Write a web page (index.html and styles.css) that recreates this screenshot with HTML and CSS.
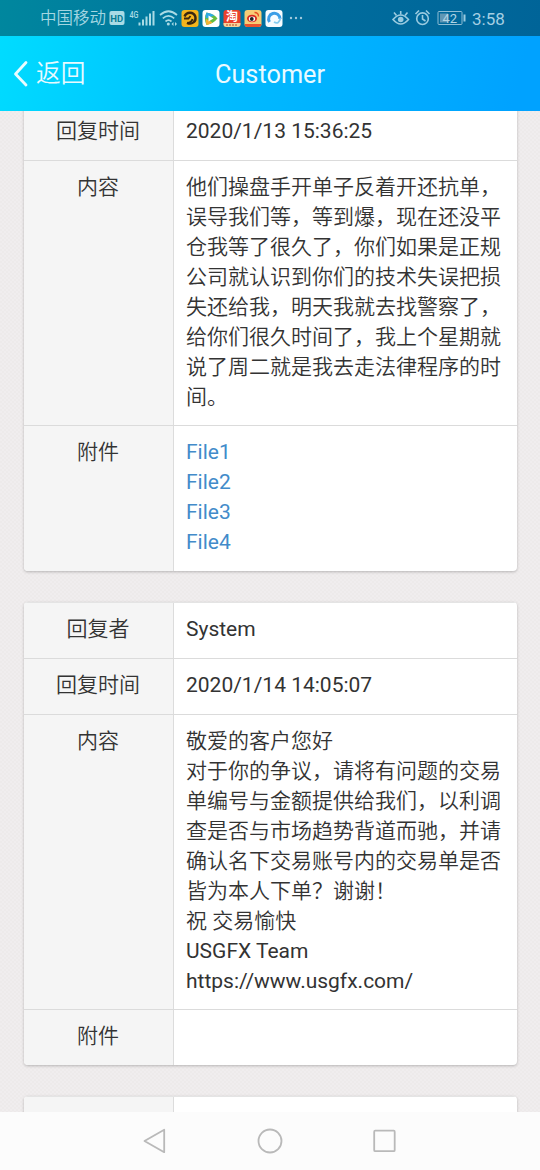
FILE: index.html
```html
<!DOCTYPE html>
<html lang="zh-CN">
<head>
<meta charset="utf-8">
<title>Customer</title>
<link rel="stylesheet" href="styles.css">
</head>
<body>
<div class="screen">
  <div class="status">
    <span class="carrier">中国移动</span>
    <svg class="glyphs" width="195" height="36" viewBox="109 0 195 36">
      <rect x="109.500" y="11" width="15" height="14" rx="2" fill="#a9dbe5"/>
      <text x="110.200" y="22" class="hd">HD</text>
      <text x="129.500" y="18" class="net" textLength="9" lengthAdjust="spacingAndGlyphs">4G</text>
      <path d="M139.500 25.500v-3M143 25.500v-6M146.500 25.500v-9M150 25.500V13.500M153.500 25.500V11" stroke="#a9dbe5" stroke-width="2"/>
      <g fill="none" stroke="#a9dbe5" stroke-width="1.700">
        <path d="M160 15q8.500-7.500 17 0M162.800 18.300q5.700-5 11.400 0M165.500 21.500q3-2.600 6 0"/>
      </g>
      <circle cx="168.300" cy="24" r="1.500" fill="#a9dbe5"/>
      <path d="M173.500 22v4l-2-2zM175 22v4l2-2z" fill="#a9dbe5"/>
      <rect x="181.500" y="10" width="17" height="17" rx="3" fill="#f4b51d"/>
      <g fill="none" stroke="#382710" stroke-width="2.400">
        <path d="M184.500 16.500c2-5 9-5 10.800 0 1.500 5-3.500 8.500-8.300 6.300"/>
        <path d="M184 18.500h4.500l2-2.500M187.500 23c3-.5 4.500-2 5-4" stroke-width="1.800"/>
      </g>
      <rect x="202.500" y="10" width="17" height="17" rx="3" fill="#fff"/>
      <path d="M206.500 12.500q8 1.500 11 6-4 5-11 6.500-3-6.500 0-12.500z" fill="#65bd40"/>
      <path d="M206.500 12.500q5 1 8 3l-8.500 3q-1-3 .5-6z" fill="#2da9e5"/><path d="M206.500 25q4-1 6-2.500L206 19q-.5 3 .5 6z" fill="#f6b335"/>
      <path d="M208.500 15.500l5 3-5 3z" fill="#fff"/>
      <rect x="223.500" y="10" width="17" height="17" rx="3" fill="#e9412c"/>
      <text x="226" y="21" class="tao">淘</text>
      <path d="M223.500 23h17v1q0 3-3 3h-11q-3 0-3-3z" fill="#f7d49b"/>
      <path d="M226 25h12" stroke="#b54b25" stroke-dasharray="2 1"/>
      <rect x="244.500" y="10" width="17" height="17" rx="3" fill="#f8cd76"/>
      <path d="M244.500 24h17q0 3-3 3h-11q-3 0-3-3z" fill="#eb542e"/>
      <ellipse cx="252" cy="18.500" rx="5" ry="3.800" fill="#d92b20"/><ellipse cx="252" cy="19" rx="3.200" ry="2.400" fill="#fff"/><circle cx="251.800" cy="19" r="1.900" fill="#222"/>
      <path d="M254.500 12.500q4 0 4 4" stroke="#e74e24" fill="none" stroke-width="1.300"/>
      <rect x="265.500" y="10" width="17" height="17" rx="3" fill="#f7fcff"/>
      <path d="M269.500 22a5.700 5.700 0 1 1 10.500-3" fill="none" stroke="#3c9ee7" stroke-width="3"/>
      <path d="M274 22q5 3 6.500-4" fill="none" stroke="#86ccef" stroke-width="1.800"/>
      <g fill="#a0cadd"><circle cx="291" cy="18" r="1.200"/><circle cx="296" cy="18" r="1.200"/><circle cx="301" cy="18" r="1.200"/></g>
    </svg>
    <svg class="power" width="76" height="36" viewBox="391 0 76 36">
      <g fill="none" stroke="#9acbe0" stroke-width="1.600">
        <path d="M393 19.500q7.700-9 15.500 0-7.700 9-15.500 0z"/>
        <path d="M400.700 14.500v-3.500M396.500 15.500l-2.500-3M405 15.500l2.500-3"/>
        <circle cx="422.500" cy="18.700" r="5.800"/><path d="M422.500 15v4l3 2M415.500 14l3.500-3.500M429.500 14l-3.500-3.500"/>
      </g>
      <circle cx="400.700" cy="19.500" r="2.800" fill="#9acbe0"/>
      <rect x="438" y="11.500" width="24" height="13" rx="1" fill="none" stroke="#8ebdd4"/>
      <rect x="440" y="13.500" width="8" height="9" fill="#6096b3"/>
      <rect x="463.500" y="14.500" width="2" height="7" fill="#9acbe0"/>
      <text x="442.500" y="23" class="level">42</text>
    </svg>
    <span class="clock">3:58</span>
  </div>
  <header class="header">
    <div class="back">
      <svg width="16" height="28" viewBox="0 0 16 28"><path d="M14 2.500 3.500 14l10.500 11" fill="none" stroke="#e9fcff" stroke-width="2.800" stroke-linecap="round" stroke-linejoin="round"/></svg>
      <span>返回</span>
    </div>
    <div class="title">Customer</div>
  </header>
  <main class="content">
    <section class="card first">
      <div class="row"><div class="label">回复时间</div><div class="value">2020/1/13 15:36:25</div></div>
      <div class="row"><div class="label">内容</div><div class="value">他们操盘手开单子反着开还抗单，<br>误导我们等，等到爆，现在还没平<br>仓我等了很久了，你们如果是正规<br>公司就认识到你们的技术失误把损<br>失还给我，明天我就去找警察了，<br>给你们很久时间了，我上个星期就<br>说了周二就是我去走法律程序的时<br>间。</div></div>
      <div class="row"><div class="label">附件</div><div class="value files"><a>File1</a><a>File2</a><a>File3</a><a>File4</a></div></div>
    </section>
    <section class="card">
      <div class="row"><div class="label">回复者</div><div class="value">System</div></div>
      <div class="row"><div class="label">回复时间</div><div class="value">2020/1/14 14:05:07</div></div>
      <div class="row"><div class="label">内容</div><div class="value">敬爱的客户您好<br>对于你的争议，请将有问题的交易<br>单编号与金额提供给我们，以利调<br>查是否与市场趋势背道而驰，并请<br>确认名下交易账号内的交易单是否<br>皆为本人下单？谢谢！<br>祝 交易愉快<br>USGFX Team<br>https://www.usgfx.com/</div></div>
      <div class="row"><div class="label">附件</div><div class="value"></div></div>
    </section>
    <section class="card">
      <div class="row"><div class="label"></div><div class="value"></div></div>
    </section>
  </main>
  <nav class="nav">
    <svg width="540" height="58" viewBox="0 0 540 58" fill="none" stroke="#b9b9b9" stroke-width="1.800" stroke-linejoin="round">
      <path d="M164.200 17.800v22.400L144.500 29z"/><circle cx="270" cy="29" r="11.500"/><rect x="374.200" y="18.700" width="20.500" height="20.500" rx="1"/>
    </svg>
  </nav>
</div>
</body>
</html>
```
FILE: styles.css
```css
* { box-sizing: border-box; }
body { margin: 0; }
.screen {
  width: 540px; height: 1170px; overflow: hidden;
  display: flex; flex-direction: column;
  font: 21px/30px Roboto, "Noto Sans CJK SC DemiLight", "Noto Sans CJK SC", sans-serif;
  color: #333;
}
.status {
  height: 36px; flex: none; display: flex; align-items: center;
  padding-left: 40px;
  background: linear-gradient(100deg, #00879e, #006f9f 50%, #006498);
}
.carrier { width: 69px; font-size: 16.5px; color: #a3d6e1; white-space: nowrap; font-weight: 300; padding-top: 2px; }
.glyphs { flex: none; }
.power { flex: none; margin-left: 87px; }
.clock { margin-left: 5px; font-size: 17px; color: #a5cfe3; padding-top: 1px; }
.hd { font: 700 9.5px Roboto, sans-serif; fill: #087c94; }
.net { font: 500 9px Roboto, sans-serif; fill: #a9dbe5; }
.tao { font: 700 12px "Noto Sans CJK SC", sans-serif; fill: #fff; }
.level { font: 13px Roboto, sans-serif; fill: #b1d5e5; }
.header {
  height: 75px; flex: none; display: grid;
  grid-template-columns: 1fr 112px 1fr; align-items: center;
  background: linear-gradient(105deg, #00dcff, #00baff 45%, #00a2ff 95%);
  color: #e9faff;
}
.back { display: flex; align-items: center; gap: 8px; padding-left: 12px; font-size: 24.7px; }
.title { font-size: 25.3px; text-align: center; white-space: nowrap; padding-top: 3px; }
.content {
  height: 1001px; flex: none; overflow: hidden; padding: 0 23.5px;
  background: repeating-conic-gradient(#edeaea 0 25%, #f0edee 0 50%) 0 0 / 4px 4px;
}
.card {
  width: 493px; margin-bottom: 31.5px; overflow: hidden;
  background: #fff; border-radius: 4px;
  box-shadow: 0 1px 3px rgba(0, 0, 0, .24);
}
.first { margin-top: -6.9px; }
.row { display: flex; min-height: 55.5px; border-top: 1px solid #dbdbdb; }
.row:first-child { border-top-color: #e4e4e4; }
.label {
  width: 150px; flex: none; padding: 11px 0 13.6px; text-align: center;
  background: #f5f5f5; border-right: 1px solid #dcdcdc;
}
.value { flex: 1; padding: 11px 0 13.6px 12.5px; white-space: nowrap; }
.files { display: flex; flex-direction: column; color: #428bca; }
.nav { height: 58px; flex: none; background: #fcfcfc; }
.nav svg { display: block; }
```
